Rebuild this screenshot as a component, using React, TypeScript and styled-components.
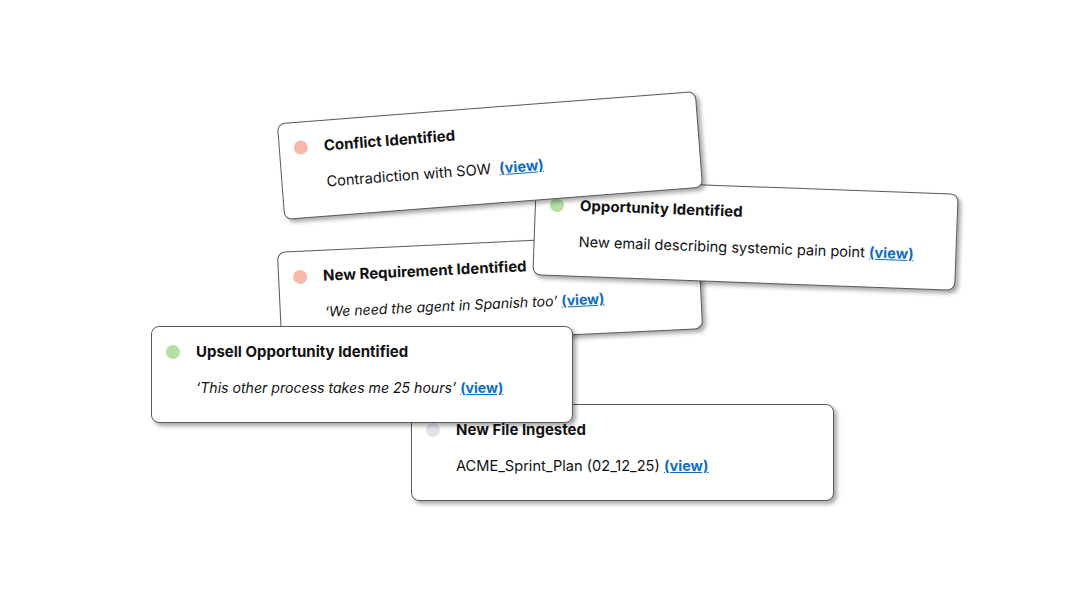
import React from 'react';
import styled, { createGlobalStyle } from 'styled-components';

const GlobalStyle = createGlobalStyle`
  html, body {
    margin: 0;
    padding: 0;
    background: #ffffff;
  }
  body {
    font-family: Inter, "Open Sans", Arial, sans-serif;
    color: #111;
  }
`;

const Canvas = styled.div`
  position: relative;
  width: 1086px;
  height: 609px;
  overflow: hidden;
  background: #fff;
`;

interface CardProps {
  $x: number;
  $y: number;
  $w: number;
  $angle: number;
  $z: number;
}

// cards sit on a free canvas, so their place and tilt is the content itself
const Card = styled.div<CardProps>`
  position: absolute;
  left: ${({ $x }) => $x}px;
  top: ${({ $y }) => $y}px;
  width: ${({ $w }) => $w}px;
  height: 97px;
  box-sizing: border-box;
  z-index: ${({ $z }) => $z};
  transform: rotate(${({ $angle }) => $angle}deg);
  transform-origin: center;
  background: #fff;
  border: 1px solid #5a5a5a;
  border-radius: 8px;
  box-shadow: 3px 3px 4px rgba(0, 0, 0, 0.35);
  padding: 13px 0 0 14px;
  display: flex;
  flex-direction: column;
  gap: 17px;
`;

const Header = styled.div`
  display: flex;
  align-items: center;
  gap: 16px;
  height: 22px;
`;

const Dot = styled.span<{ $color: string }>`
  width: 14px;
  height: 14px;
  margin-top: 2px;
  border-radius: 50%;
  background: ${({ $color }) => $color};
  flex: none;
`;

const Title = styled.span`
  font-weight: 700;
  font-size: 15px;
  color: #111;
`;

const Body = styled.div<{ $italic?: boolean }>`
  padding-left: 30px;
  font-size: ${({ $italic }) => ($italic ? '14.1px' : '14.6px')};
  font-style: ${({ $italic }) => ($italic ? 'italic' : 'normal')};
  white-space: pre;
  color: #111;
`;

const ViewLink = styled.a`
  font-style: normal;
  font-weight: 700;
  color: #0f6cc4;
  text-decoration: underline;
`;

const RED = '#f6b9aa';
const GREEN = '#b3e0a3';
const GREY = '#dfe4ea';

const cards = [
  {
    title: 'New File Ingested',
    body: 'ACME_Sprint_Plan (02_12_25) ',
    dot: GREY,
    x: 411, y: 404, w: 423, angle: 0, z: 1,
  },
  {
    title: 'New Requirement Identified',
    body: '\u2018We need the agent in Spanish too\u2019 ',
    italic: true,
    dot: RED,
    x: 279, y: 242, w: 422, angle: -2.7, z: 2,
  },
  {
    title: 'Opportunity Identified',
    body: 'New email describing systemic pain point ',
    dot: GREEN,
    x: 534, y: 186, w: 423, angle: 2.1, z: 3,
  },
  {
    title: 'Conflict Identified',
    body: 'Contradiction with SOW  ',
    dot: RED,
    x: 280, y: 107, w: 420, angle: -4.4, z: 4,
  },
  {
    title: 'Upsell Opportunity Identified',
    body: '\u2018This other process takes me 25 hours\u2019 ',
    italic: true,
    dot: GREEN,
    x: 151, y: 326, w: 422, angle: 0, z: 5,
  },
];

export default function App() {
  return (
    <>
      <GlobalStyle />
      <Canvas>
        {cards.map((c) => (
          <Card key={c.title} $x={c.x} $y={c.y} $w={c.w} $angle={c.angle} $z={c.z}>
            <Header>
              <Dot $color={c.dot} />
              <Title>{c.title}</Title>
            </Header>
            <Body $italic={c.italic}>
              {c.body}
              <ViewLink href="#">(view)</ViewLink>
            </Body>
          </Card>
        ))}
      </Canvas>
    </>
  );
}
